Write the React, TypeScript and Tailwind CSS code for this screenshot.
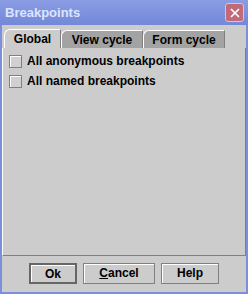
import { X } from "lucide-react";

function Check({ label }: { label: string }) {
  return (
    <div className="flex items-center gap-[5px] h-[20px]">
      <div className="w-[13px] h-[13px] border border-[#808080] bg-[#d0d0d0] shadow-[inset_1px_1px_0_#ffffff]" />
      <span className="text-[12px] font-bold">{label}</span>
    </div>
  );
}

export default function App() {
  return (
    <div
      className="w-[248px] h-[294px] flex flex-col bg-[#7c8fdc] text-[12px] font-bold text-black"
      style={{ fontFamily: '"Liberation Sans", Arial, sans-serif' }}
    >
      {/* Title bar */}
      <div className="h-[25px] flex items-center justify-between pl-[5px] pr-[4px] bg-gradient-to-b from-[#8a9ce3] to-[#7388d8]">
        <span className="text-[13px] text-[#dde4ff]">Breakpoints</span>
        <div className="w-[19px] h-[19px] rounded-[3px] bg-[#c06a7a] border border-[#e0c0d0] flex items-center justify-center">
          <X className="w-[14px] h-[14px] text-white" strokeWidth={3} />
        </div>
      </div>

      <div className="flex-1 mx-[2px] mb-[2px] bg-[#cccccc] flex flex-col">
        {/* Tabs */}
        <div className="flex items-end h-[19px] mt-[4px] pl-[2px]">
          <div className="h-[19px] w-[57px] flex items-center justify-center bg-[#cccccc] border-t border-l border-white border-r border-r-[#808080] rounded-tl-[6px]">
            Global
          </div>
          <div className="h-[18px] w-[82px] flex items-center justify-center bg-[#a3a3a3] border-t border-l border-white border-r border-r-[#808080] rounded-tl-[6px]">
            View cycle
          </div>
          <div className="h-[18px] w-[82px] flex items-center justify-center bg-[#a3a3a3] border-t border-l border-white border-r border-r-[#808080] rounded-tl-[6px]">
            Form cycle
          </div>
        </div>

        {/* Content */}
        <div className="h-[208px] border-l border-white border-r border-r-[#808080] border-b border-b-[#808080] pl-[6px] pt-[3px]">
          <Check label="All anonymous breakpoints" />
          <Check label="All named breakpoints" />
        </div>

        {/* Buttons */}
        <div className="flex-1 flex items-center justify-center gap-[6px] pb-[2px]">
          <button className="w-[48px] h-[21px] border-2 border-[#666666] bg-[#cccccc] shadow-[inset_1px_1px_0_#ffffff]">Ok</button>
          <button className="w-[72px] h-[21px] border border-[#808080] shadow-[inset_1px_1px_0_#ffffff]">
            <span className="underline">C</span>ancel
          </button>
          <button className="w-[58px] h-[21px] border border-[#808080] shadow-[inset_1px_1px_0_#ffffff]">Help</button>
        </div>
      </div>
    </div>
  );
}
